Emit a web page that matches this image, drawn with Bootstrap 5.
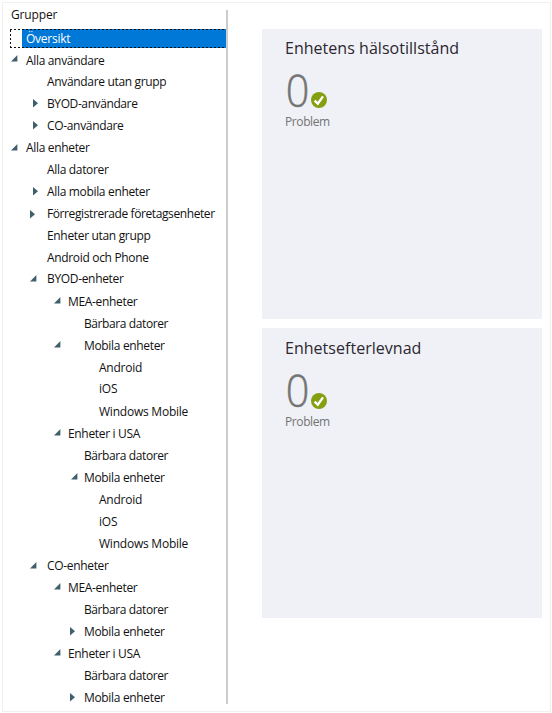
<!DOCTYPE html>
<html lang="sv">
<head>
<meta charset="utf-8">
<meta name="viewport" content="width=device-width, initial-scale=1">
<title>Grupper</title>
<link href="https://cdn.jsdelivr.net/npm/bootstrap@5.3.0/dist/css/bootstrap.min.css" rel="stylesheet">
<style>
body{font-family:"Open Sans","Noto Sans",sans-serif;font-size:12px;color:#111;background:#fff;overflow:hidden}
.frame{width:549px;height:710px;margin:2px 0 0 2px;border:1px solid #f0f0f0}
.groups{width:225px;height:694px;margin-top:7px;border-right:2px solid #ccc}
.groups-title{height:19px;line-height:10px;padding-left:8px;letter-spacing:-.15px}
.tree-row{height:22px;line-height:24px;letter-spacing:-.33px;white-space:nowrap}
.tree-row.first{height:21px}
.tree-row.wide{letter-spacing:-.23px}
.tree-row.tight{letter-spacing:-.4px}
.tree-row.up{position:relative;top:-1px}
.slot{flex:none;height:22px}
.slot svg{display:block;fill:#3f5f6c}
.l1 .slot{width:23px;padding:8px 0 0 8px}
.l1.first .slot{padding-top:6px}
.l2 .slot{width:44px;padding:7px 0 0 30px}
.l2 .slot.open{padding:8px 0 0 27px}
.l3 .slot{width:65px;padding:7px 0 0 51px}
.l4 .slot{width:81px;padding:7px 0 0 67px}
.l4 .slot.far{padding-left:51px}
.l4 .slot.open{padding-left:68px}
.l5 .slot{width:96px}
.selected{height:19px;line-height:19px;margin:0 0 1px 7px;letter-spacing:-.25px;color:#fff;background:repeating-linear-gradient(90deg,#111 0 2px,transparent 2px 4px) top/100% 1px no-repeat,repeating-linear-gradient(90deg,#111 0 2px,transparent 2px 4px) bottom/100% 1px no-repeat,repeating-linear-gradient(0deg,#111 0 2px,transparent 2px 4px) left/1px 100% no-repeat,linear-gradient(#0078d7,#0078d7) 12px 0/100% 100% no-repeat;padding-left:16px}
.tiles{margin:26px 0 0 34px;gap:9px}
.tile{width:280px;height:290px;background:#f0f1f6;padding:8px 0 0 23px}
.tile-title{font-size:16px;line-height:22px;color:#2b2730;font-weight:400;letter-spacing:.03px}
.count{font-size:44px;line-height:44px;color:#747474;font-weight:300;height:44px;margin-top:9px}
.digit{display:inline-block;width:26px;transform:scaleX(.94);-webkit-text-stroke:.5px #747474}
.tile-label{color:#747474;line-height:16px;margin-top:2px;letter-spacing:-.4px}
.ok{margin-top:24px}
.tile+.tile{padding-top:9px}
.tile+.tile .ok{margin-top:25px}
</style>
<script src="https://cdn.jsdelivr.net/npm/bootstrap@5.3.0/dist/js/bootstrap.bundle.min.js"></script>
</head>
<body>
<svg class="d-none"><symbol id="open" viewBox="0 0 7 7"><path d="M6.4 0V6.4H0z"/></symbol><symbol id="shut" viewBox="0 0 5 9"><path d="M0 0L5 4.2L0 8.4z"/></symbol>
<symbol id="check" viewBox="0 0 16 16"><circle cx="8" cy="8" r="8" fill="#84a010"/><path d="M3.6 8.6L6.8 11.6L12 4.4" fill="none" stroke="#fff" stroke-width="2.4"/></symbol></svg>
<div class="frame d-flex">
<nav class="groups flex-shrink-0">
<div class="groups-title">Grupper</div>
<ul class="list-unstyled m-0">
<li class="selected">Översikt</li>
<li class="tree-row d-flex l1 first"><span class="slot"><svg width="7" height="7"><use href="#open"/></svg></span>Alla användare</li>
<li class="tree-row d-flex l2"><span class="slot"></span>Användare utan grupp</li>
<li class="tree-row d-flex l2 tight"><span class="slot"><svg width="5" height="9"><use href="#shut"/></svg></span>BYOD-användare</li>
<li class="tree-row d-flex l2"><span class="slot"><svg width="5" height="9"><use href="#shut"/></svg></span>CO-användare</li>
<li class="tree-row d-flex l1"><span class="slot"><svg width="7" height="7"><use href="#open"/></svg></span>Alla enheter</li>
<li class="tree-row d-flex l2"><span class="slot"></span>Alla datorer</li>
<li class="tree-row d-flex l2"><span class="slot"><svg width="5" height="9"><use href="#shut"/></svg></span>Alla mobila enheter</li>
<li class="tree-row d-flex l2 tight"><span class="slot open"><svg width="5" height="9"><use href="#shut"/></svg></span>Förregistrerade företagsenheter</li>
<li class="tree-row d-flex l2"><span class="slot"></span>Enheter utan grupp</li>
<li class="tree-row d-flex l2"><span class="slot"></span>Android och Phone</li>
<li class="tree-row d-flex l2 up"><span class="slot open"><svg width="7" height="7"><use href="#open"/></svg></span>BYOD-enheter</li>
<li class="tree-row d-flex l3"><span class="slot"><svg width="7" height="7"><use href="#open"/></svg></span>MEA-enheter</li>
<li class="tree-row d-flex l4 tight"><span class="slot"></span>Bärbara datorer</li>
<li class="tree-row d-flex l4"><span class="slot far"><svg width="7" height="7"><use href="#open"/></svg></span>Mobila enheter</li>
<li class="tree-row d-flex l5 wide"><span class="slot"></span>Android</li>
<li class="tree-row d-flex l5 up wide"><span class="slot"></span>iOS</li>
<li class="tree-row d-flex l5 wide"><span class="slot"></span>Windows Mobile</li>
<li class="tree-row d-flex l3"><span class="slot"><svg width="7" height="7"><use href="#open"/></svg></span>Enheter i USA</li>
<li class="tree-row d-flex l4 tight"><span class="slot"></span>Bärbara datorer</li>
<li class="tree-row d-flex l4"><span class="slot open"><svg width="7" height="7"><use href="#open"/></svg></span>Mobila enheter</li>
<li class="tree-row d-flex l5 wide"><span class="slot"></span>Android</li>
<li class="tree-row d-flex l5 wide"><span class="slot"></span>iOS</li>
<li class="tree-row d-flex l5 wide"><span class="slot"></span>Windows Mobile</li>
<li class="tree-row d-flex l2"><span class="slot open"><svg width="7" height="7"><use href="#open"/></svg></span>CO-enheter</li>
<li class="tree-row d-flex l3"><span class="slot"><svg width="7" height="7"><use href="#open"/></svg></span>MEA-enheter</li>
<li class="tree-row d-flex l4 tight"><span class="slot"></span>Bärbara datorer</li>
<li class="tree-row d-flex l4"><span class="slot"><svg width="5" height="9"><use href="#shut"/></svg></span>Mobila enheter</li>
<li class="tree-row d-flex l3"><span class="slot"><svg width="7" height="7"><use href="#open"/></svg></span>Enheter i USA</li>
<li class="tree-row d-flex l4 tight"><span class="slot"></span>Bärbara datorer</li>
<li class="tree-row d-flex l4"><span class="slot"><svg width="5" height="9"><use href="#shut"/></svg></span>Mobila enheter</li>
</ul>
</nav>
<main class="tiles d-flex flex-column">
<section class="tile"><h2 class="tile-title m-0">Enhetens hälsotillstånd</h2>
<div class="count d-flex"><span class="digit">0</span><svg class="ok" width="16" height="16"><use href="#check"/></svg></div>
<div class="tile-label">Problem</div></section>
<section class="tile"><h2 class="tile-title m-0">Enhetsefterlevnad</h2>
<div class="count d-flex"><span class="digit">0</span><svg class="ok" width="16" height="16"><use href="#check"/></svg></div>
<div class="tile-label">Problem</div></section>
</main>
</div>
</body>
</html>
